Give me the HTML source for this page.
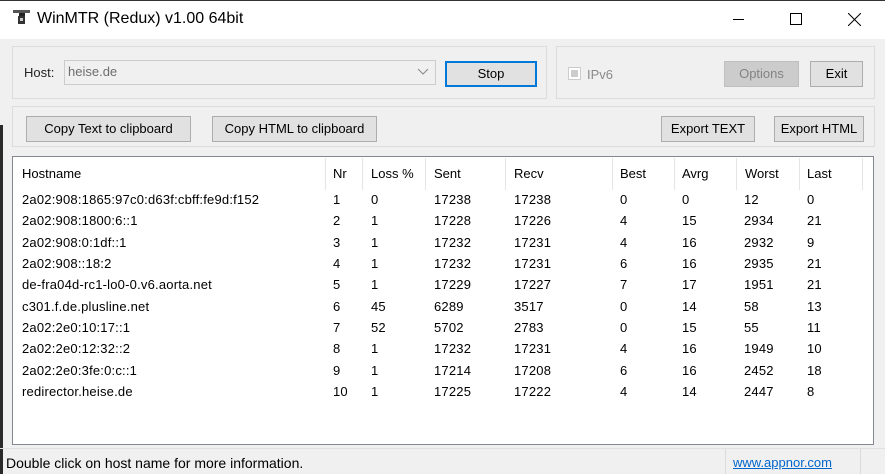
<!DOCTYPE html><html><head><style>
*{box-sizing:border-box;margin:0;padding:0}
body{width:885px;height:474px;background:#f0f0f0;font-family:"Liberation Sans",sans-serif;font-size:13px;color:#000;position:relative;overflow:hidden}
.a{position:absolute;white-space:nowrap}
.tb{position:absolute;left:0;top:0;width:885px;height:39px;background:#fff;border-top:1px solid #333}
.grp{position:absolute;border:1px solid #dcdcdc}
.btn{position:absolute;background:#e1e1e1;border:1px solid #adadad;text-align:center;line-height:24px}
.list{position:absolute;left:12px;top:156px;width:862px;height:289px;background:#fff;border:1px solid #828790}
.hd{position:absolute;top:9px;color:#000}
.dv{position:absolute;top:1px;width:1px;height:32px;background:#e5e5e5}
td{letter-spacing:0.2px}
</style></head><body>
<div class="tb"></div>
<svg class="a" style="left:12px;top:8px" width="20" height="20" viewBox="0 0 20 20"><rect x="1" y="2" width="17" height="3" fill="#555"/><rect x="7" y="5" width="6" height="3" fill="#222"/><rect x="6" y="8" width="7" height="8" fill="#333"/><rect x="8" y="10" width="3" height="3" fill="#ccc"/></svg>
<div class="a" style="left:37px;top:10px;font-size:16px">WinMTR (Redux) v1.00 64bit</div>
<div class="a" style="left:733px;top:19px;width:11px;height:1px;background:#000"></div>
<div class="a" style="left:790px;top:13px;width:12px;height:12px;border:1px solid #000"></div>
<svg class="a" style="left:848px;top:13px" width="13" height="13"><path d="M0 0L13 13M13 0L0 13" stroke="#000" stroke-width="1"/></svg>
<div class="a" style="left:0;top:125px;width:3px;height:349px;background:#2a2a2a"></div>
<div class="grp" style="left:12px;top:46px;width:535px;height:53px"></div>
<div class="grp" style="left:556px;top:46px;width:319px;height:53px"></div>
<div class="grp" style="left:12px;top:106px;width:863px;height:41px"></div>
<div class="a" style="left:24px;top:65px;color:#222">Host:</div>
<div class="a" style="left:64px;top:60px;width:372px;height:25px;background:#f0f0f0;border:1px solid #ccc"></div>
<div class="a" style="left:68px;top:64px;color:#6d6d6d">heise.de</div>
<svg class="a" style="left:417px;top:68px" width="12" height="8"><path d="M1 1L6 6L11 1" stroke="#888" fill="none"/></svg>
<div class="btn" style="left:445px;top:61px;width:92px;height:26px;border:2px solid #0078d7;line-height:22px">Stop</div>
<div class="a" style="left:568px;top:67px;width:13px;height:13px;border:1px solid #ccc;background:#fff"><div style="margin:2px;width:7px;height:7px;background:#ccc"></div></div>
<div class="a" style="left:587px;top:67px;color:#8a8a8a">IPv6</div>
<div class="btn" style="left:724px;top:61px;width:75px;height:26px;background:#cccccc;border-color:#bfbfbf;color:#838383">Options</div>
<div class="btn" style="left:810px;top:61px;width:53px;height:26px">Exit</div>
<div class="btn" style="left:26px;top:116px;width:165px;height:26px">Copy Text to clipboard</div>
<div class="btn" style="left:212px;top:116px;width:165px;height:26px">Copy HTML to clipboard</div>
<div class="btn" style="left:661px;top:116px;width:94px;height:26px">Export TEXT</div>
<div class="btn" style="left:774px;top:116px;width:90px;height:26px">Export HTML</div>
<div class="list">
<div class="dv" style="left:312px"></div><div class="dv" style="left:349px"></div><div class="dv" style="left:412px"></div><div class="dv" style="left:492px"></div><div class="dv" style="left:599px"></div><div class="dv" style="left:661px"></div><div class="dv" style="left:723px"></div><div class="dv" style="left:786px"></div><div class="dv" style="left:849px"></div>
<div class="hd" style="left:9px">Hostname</div><div class="hd" style="left:320px">Nr</div><div class="hd" style="left:358px">Loss %</div><div class="hd" style="left:421px">Sent</div><div class="hd" style="left:501px">Recv</div><div class="hd" style="left:607px">Best</div><div class="hd" style="left:669px">Avrg</div><div class="hd" style="left:732px">Worst</div><div class="hd" style="left:794px">Last</div>
<table style="position:absolute;left:9px;top:32px;border-collapse:collapse;font-size:13px">
<colgroup><col style="width:311px"><col style="width:38px"><col style="width:63px"><col style="width:80px"><col style="width:106px"><col style="width:62px"><col style="width:62px"><col style="width:63px"><col></colgroup>
<tr style="height:21.3px"><td>2a02:908:1865:97c0:d63f:cbff:fe9d:f152</td><td>1</td><td>0</td><td>17238</td><td>17238</td><td>0</td><td>0</td><td>12</td><td>0</td></tr>
<tr style="height:21.3px"><td>2a02:908:1800:6::1</td><td>2</td><td>1</td><td>17228</td><td>17226</td><td>4</td><td>15</td><td>2934</td><td>21</td></tr>
<tr style="height:21.3px"><td>2a02:908:0:1df::1</td><td>3</td><td>1</td><td>17232</td><td>17231</td><td>4</td><td>16</td><td>2932</td><td>9</td></tr>
<tr style="height:21.3px"><td>2a02:908::18:2</td><td>4</td><td>1</td><td>17232</td><td>17231</td><td>6</td><td>16</td><td>2935</td><td>21</td></tr>
<tr style="height:21.3px"><td>de-fra04d-rc1-lo0-0.v6.aorta.net</td><td>5</td><td>1</td><td>17229</td><td>17227</td><td>7</td><td>17</td><td>1951</td><td>21</td></tr>
<tr style="height:21.3px"><td>c301.f.de.plusline.net</td><td>6</td><td>45</td><td>6289</td><td>3517</td><td>0</td><td>14</td><td>58</td><td>13</td></tr>
<tr style="height:21.3px"><td>2a02:2e0:10:17::1</td><td>7</td><td>52</td><td>5702</td><td>2783</td><td>0</td><td>15</td><td>55</td><td>11</td></tr>
<tr style="height:21.3px"><td>2a02:2e0:12:32::2</td><td>8</td><td>1</td><td>17232</td><td>17231</td><td>4</td><td>16</td><td>1949</td><td>10</td></tr>
<tr style="height:21.3px"><td>2a02:2e0:3fe:0:c::1</td><td>9</td><td>1</td><td>17214</td><td>17208</td><td>6</td><td>16</td><td>2452</td><td>18</td></tr>
<tr style="height:21.3px"><td>redirector.heise.de</td><td>10</td><td>1</td><td>17225</td><td>17222</td><td>4</td><td>14</td><td>2447</td><td>8</td></tr>
</table></div>
<div class="a" style="left:0;top:448px;width:885px;height:1px;background:#e0e0e0"></div>
<div class="a" style="left:6px;top:455px;font-size:14px">Double click on host name for more information.</div>
<div class="a" style="left:725px;top:449px;width:1px;height:25px;background:#dadada"></div>
<div class="a" style="left:860px;top:449px;width:1px;height:25px;background:#dadada"></div>
<div class="a" style="left:733px;top:455px;color:#0066cc;text-decoration:underline">www.appnor.com</div>
</body></html>
